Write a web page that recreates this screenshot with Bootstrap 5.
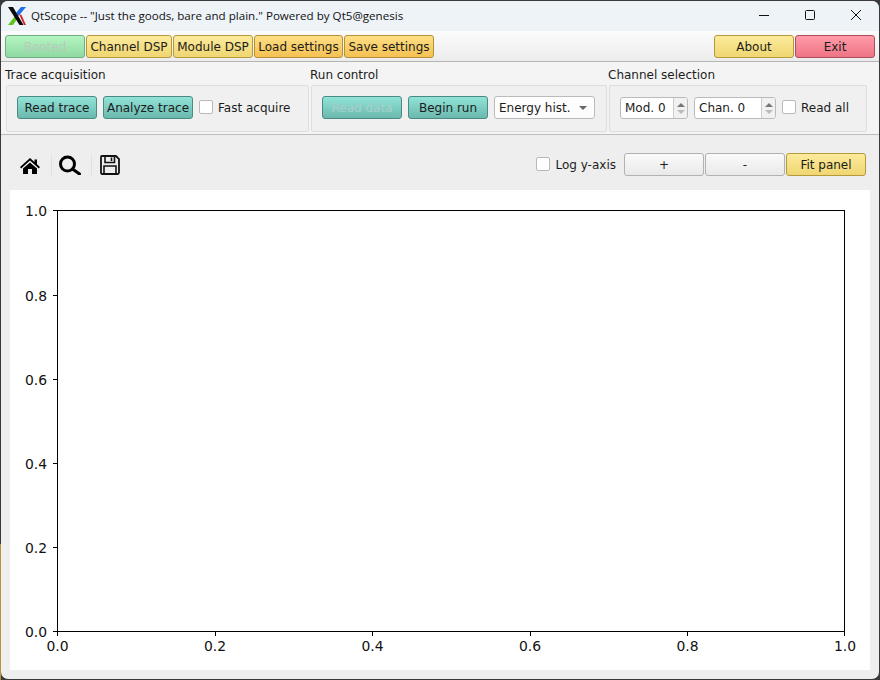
<!DOCTYPE html>
<html lang="en">
<head>
    <meta charset="UTF-8">
    <meta name="viewport" content="width=device-width, initial-scale=1.0">
    <title>QtScope</title>
    <link href="https://cdn.jsdelivr.net/npm/bootstrap@5.3.0/dist/css/bootstrap.min.css" rel="stylesheet">
    <style>
        html, body {
            height: 100%;
            overflow: hidden;
        }
        body {
            background: linear-gradient(#3a3a3c 80%, #b8952e 80%) left top / 1px 100% no-repeat, #3a3a3c;
            font-family: "DejaVu Sans", sans-serif;
            font-size: 12px;
            color: #1c1c1c;
            padding: 1px;
        }
        .qt-window {
            height: 678px;
            background: #efefef;
            border-radius: 7px;
            overflow: hidden;
        }
        .qt-title {
            height: 30px;
            background: #eef3f8;
            padding-left: 7px;
            font-family: "Open Sans", "Noto Sans", sans-serif;
            font-size: 11.6px;
            color: #111;
        }
        .qt-title svg.logo {
            margin-right: 5px;
        }
        .win-controls {
            gap: 30px;
            padding-right: 15px;
        }
        .qt-topbar {
            height: 31px;
            background: linear-gradient(#fbfbfb, #ececec);
            border-bottom: 1px solid #b4b4b4;
            padding: 4px 4px 3px 4px;
            gap: 1px;
        }
        .qt-btn {
            height: 23px;
            padding: 0;
            font-size: 12px;
            line-height: 20px;
            border-radius: 3px;
            color: #1c1c1c;
            white-space: nowrap;
        }
        .btn-booted {
            width: 80px;
            background: linear-gradient(#b4f5c0, #8fd9a2);
            border: 1px solid #6fae80;
            color: #b9c9bd;
        }
        .btn-yellow {
            background: linear-gradient(#fdeb9c, #efd671);
            border: 1px solid #b59a3c;
        }
        .btn-orange {
            background: linear-gradient(#ffdf85, #f4c152);
            border: 1px solid #b5923a;
        }
        .btn-red {
            width: 80px;
            background: linear-gradient(#ff9ba8, #ee7485);
            border: 1px solid #b04d5c;
        }
        .btn-teal {
            width: 80px;
            background: linear-gradient(#90e3d8, #6cb9ae);
            border: 1px solid #4a8a82;
        }
        .btn-teal-off {
            color: #a9cfca;
        }
        .btn-grey {
            width: 80px;
            background: linear-gradient(#fafafa, #e9e9e9);
            border: 1px solid #b2b2b2;
        }
        .w-86 { width: 86px; }
        .w-80 { width: 80px; }
        .w-89 { width: 89px; }
        .w-90 { width: 90px; }
        .qt-groups {
            height: 73px;
            background: #f4f4f4;
            border-bottom: 1px solid #bdbdbd;
            padding-left: 4px;
            gap: 2px;
        }
        .qt-label {
            height: 23px;
            line-height: 27px;
            margin-left: -1px;
            white-space: nowrap;
        }
        .qt-box {
            height: 47px;
            border: 1px solid #dedede;
            border-radius: 2px;
            background: #f0f0f0;
            padding: 0 0 2px 10px;
            gap: 6px;
        }
        .group-trace { width: 304px; }
        .group-trace .qt-label { margin-left: 0; }
        .group-trace .qt-box { margin-left: 1px; }
        .group-run { width: 296px; }
        .group-channel { width: 258px; }
        .check-row {
            height: 23px;
        }
        .qt-check {
            width: 14px;
            height: 14px;
            margin-bottom: 1px;
            background: #fff;
            border: 1px solid #b9b9b9;
            border-radius: 2px;
            flex: none;
        }
        .check-text {
            margin-left: 5px;
            white-space: nowrap;
        }
        .qt-combo {
            width: 101px;
            height: 23px;
            background: linear-gradient(#fff, #fbfbfb);
            border: 1px solid #bbb;
            border-radius: 3px;
            padding: 0 7px 0 4px;
        }
        .combo-arrow {
            width: 0;
            height: 0;
            border-left: 4px solid transparent;
            border-right: 4px solid transparent;
            border-top: 4px solid #666;
        }
        .qt-spin {
            height: 22px;
            margin-top: 1px;
            background: #fff;
            border: 1px solid #bbb;
            border-radius: 3px;
            padding-left: 4px;
        }
        .spin-mod { width: 68px; }
        .spin-chan { width: 82px; }
        .spin-btns {
            width: 14px;
            height: 100%;
            background: #f1f1f1;
            border-left: 1px solid #ccc;
            border-radius: 0 2px 2px 0;
            gap: 3px;
        }
        .spin-up, .spin-down {
            width: 0;
            height: 0;
            border-left: 4px solid transparent;
            border-right: 4px solid transparent;
        }
        .spin-up { border-bottom: 4px solid #777; }
        .spin-down { border-top: 4px solid #bbb; }
        .qt-tools {
            height: 55px;
            background: #eeeeee;
            padding: 4px 13px 0 19px;
        }
        .tool-sep {
            width: 1px;
            height: 20px;
            margin: 0 7px 0 10px;
            background: #e0e0e0;
        }
        .tool-right { gap: 1px; }
        .tool-log { margin-right: 7px; }
        .qt-plot {
            background: #fff;
            margin: 0 9px;
            height: 480px;
        }
        .qt-plot svg {
            display: block;
        }
        .qt-plot text {
            font-family: "DejaVu Sans", sans-serif;
            font-size: 13.9px;
            fill: #111;
        }
    </style>
</head>
<body>

    <div class="qt-window d-flex flex-column">

        <!-- title bar -->
        <div class="qt-title d-flex align-items-center justify-content-between">
            <div class="d-flex align-items-center">
                <svg class="logo" width="18" height="18" viewBox="0 0 18 18">
                    <polygon points="13,0 18,0 10.5,9 8,6" fill="#1f6fe8"/>
                    <polygon points="0,18 5,18 9.5,11.5 7,9" fill="#5cc41e"/>
                    <polygon points="11,7 13.5,8 18,18 16,18" fill="#d8202a"/>
                    <polygon points="0,0 5,0 15.5,18 11.5,18" fill="#0a0a0a"/>
                </svg>
                <span>QtScope -- "Just the goods, bare and plain." Powered by Qt5@genesis</span>
            </div>
            <div class="win-controls d-flex align-items-center">
                <svg width="16" height="16" viewBox="0 0 16 16"><line x1="3" y1="7.5" x2="13" y2="7.5" stroke="#111"/></svg>
                <svg width="16" height="16" viewBox="0 0 16 16"><rect x="3.5" y="2.5" width="9" height="9" rx="1" fill="none" stroke="#111"/></svg>
                <svg width="16" height="16" viewBox="0 0 16 16"><path d="M3 2 L13 12 M13 2 L3 12" stroke="#111"/></svg>
            </div>
        </div>

        <!-- top buttons -->
        <div class="qt-topbar d-flex">
            <button class="btn qt-btn btn-booted">Booted</button>
            <button class="btn qt-btn btn-yellow w-86">Channel DSP</button>
            <button class="btn qt-btn btn-yellow w-80">Module DSP</button>
            <button class="btn qt-btn btn-orange w-89">Load settings</button>
            <button class="btn qt-btn btn-orange w-90">Save settings</button>
            <button class="btn qt-btn btn-yellow w-80 ms-auto">About</button>
            <button class="btn qt-btn btn-red">Exit</button>
        </div>

        <!-- group boxes -->
        <div class="qt-groups d-flex">
            <div class="group-trace">
                <div class="qt-label">Trace acquisition</div>
                <div class="qt-box d-flex align-items-center">
                    <button class="btn qt-btn btn-teal">Read trace</button>
                    <button class="btn qt-btn btn-teal w-90">Analyze trace</button>
                    <div class="check-row d-flex align-items-center">
                        <span class="qt-check"></span>
                        <span class="check-text">Fast acquire</span>
                    </div>
                </div>
            </div>
            <div class="group-run">
                <div class="qt-label">Run control</div>
                <div class="qt-box d-flex align-items-center">
                    <button class="btn qt-btn btn-teal btn-teal-off">Read data</button>
                    <button class="btn qt-btn btn-teal">Begin run</button>
                    <div class="qt-combo d-flex align-items-center justify-content-between">
                        <span>Energy hist.</span>
                        <span class="combo-arrow"></span>
                    </div>
                </div>
            </div>
            <div class="group-channel">
                <div class="qt-label">Channel selection</div>
                <div class="qt-box d-flex align-items-center">
                    <div class="qt-spin spin-mod d-flex align-items-center justify-content-between">
                        <span>Mod. 0</span>
                        <div class="spin-btns d-flex flex-column align-items-center justify-content-center">
                            <span class="spin-up"></span>
                            <span class="spin-down"></span>
                        </div>
                    </div>
                    <div class="qt-spin spin-chan d-flex align-items-center justify-content-between">
                        <span>Chan. 0</span>
                        <div class="spin-btns d-flex flex-column align-items-center justify-content-center">
                            <span class="spin-up"></span>
                            <span class="spin-down"></span>
                        </div>
                    </div>
                    <div class="check-row d-flex align-items-center">
                        <span class="qt-check"></span>
                        <span class="check-text">Read all</span>
                    </div>
                </div>
            </div>
        </div>

        <!-- plot toolbar -->
        <div class="qt-tools d-flex align-items-center justify-content-between">
            <div class="d-flex align-items-center">
                <svg width="21" height="21" viewBox="0 0 21 21">
                    <path d="M10 4 L14.5 8 V5.5 H17 V10.2 L20 13 L18.8 14.4 L10 6.6 L1.2 14.4 L0 13 Z" fill="#000"/>
                    <path d="M10 8.4 L17 14.5 V20 H12 V15 H8 V20 H3 V14.5 Z" fill="#000"/>
                </svg>
                <span class="tool-sep"></span>
                <svg width="22" height="21" viewBox="0 0 22 21">
                    <circle cx="8.5" cy="10" r="7" fill="none" stroke="#000" stroke-width="3"/>
                    <line x1="13.5" y1="15" x2="20.5" y2="20" stroke="#000" stroke-width="3" stroke-linecap="round"/>
                </svg>
                <span class="tool-sep"></span>
                <svg width="22" height="21" viewBox="0 0 22 21">
                    <path d="M3 2 H17 L20 5 V18.5 Q20 20 18.5 20 H3 Q2 20 2 18.5 V3 Q2 2 3 2 Z" fill="none" stroke="#111" stroke-width="1.8"/>
                    <path d="M6 2 V8.5 H15.5 V2 M12.5 3.5 V7" fill="none" stroke="#111" stroke-width="1.6"/>
                    <path d="M5 20 V12 H17 V20" fill="none" stroke="#111" stroke-width="1.6"/>
                </svg>
            </div>
            <div class="tool-right d-flex align-items-center">
                <div class="tool-log check-row d-flex align-items-center">
                    <span class="qt-check"></span>
                    <span class="check-text">Log y-axis</span>
                </div>
                <button class="btn qt-btn btn-grey">+</button>
                <button class="btn qt-btn btn-grey">-</button>
                <button class="btn qt-btn btn-yellow w-80">Fit panel</button>
            </div>
        </div>

        <!-- plot -->
        <div class="qt-plot">
            <svg width="860" height="480" viewBox="0 0 860 480">
                <rect x="47.5" y="20.5" width="787" height="421" fill="none" stroke="#000"/>
                <g stroke="#000">
                    <path d="M43 20.5 H47 M43 105.5 H47 M43 189.5 H47 M43 273.5 H47 M43 357.5 H47 M43 441.5 H47"/>
                    <path d="M47.5 442 V446 M205.5 442 V446 M362.5 442 V446 M520.5 442 V446 M677.5 442 V446 M834.5 442 V446"/>
                </g>
                <g text-anchor="end">
                    <text x="37" y="26">1.0</text>
                    <text x="37" y="110.5">0.8</text>
                    <text x="37" y="194.5">0.6</text>
                    <text x="37" y="279">0.4</text>
                    <text x="37" y="363">0.2</text>
                    <text x="37" y="447">0.0</text>
                </g>
                <g text-anchor="middle">
                    <text x="47.5" y="461">0.0</text>
                    <text x="205" y="461">0.2</text>
                    <text x="362.5" y="461">0.4</text>
                    <text x="520" y="461">0.6</text>
                    <text x="677.5" y="461">0.8</text>
                    <text x="835" y="461">1.0</text>
                </g>
            </svg>
        </div>
    </div>

    <script src="https://cdn.jsdelivr.net/npm/bootstrap@5.3.0/dist/js/bootstrap.bundle.min.js"></script>

</body>
</html>
